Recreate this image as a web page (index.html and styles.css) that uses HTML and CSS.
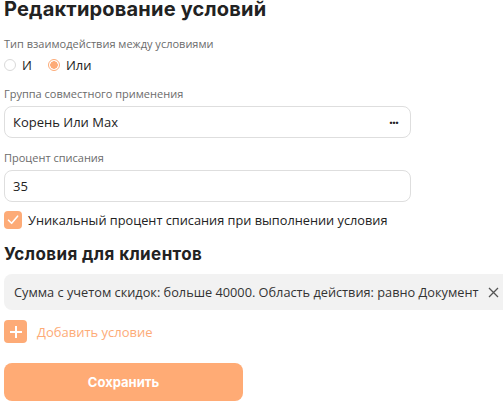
FILE: index.html
```html
<!DOCTYPE html>
<html lang="ru">
<head>
<meta charset="utf-8">
<link rel="stylesheet" href="styles.css">
</head>
<body>
<div class="page">
  <h1 class="title">Редактирование условий</h1>
  <div class="label label-first">Тип взаимодействия между условиями</div>
  <div class="radios">
    <label class="radio"><span class="radio-dot"></span><span>И</span></label>
    <label class="radio"><span class="radio-dot radio-on"></span><span>Или</span></label>
  </div>
  <div class="label">Группа совместного применения</div>
  <div class="field">
    <span>Корень Или Max</span>
    <span class="dots">···</span>
  </div>
  <div class="label">Процент списания</div>
  <div class="field"><span>35</span></div>
  <div class="check-row">
    <span class="checkbox">
      <svg width="14" height="14" viewBox="0 0 14 14"><path d="M2.5 7.2 L5.6 10.3 L11.6 3.2" fill="none" stroke="#fff" stroke-width="1.6" stroke-linecap="round" stroke-linejoin="round"/></svg>
    </span>
    <span>Уникальный процент списания при выполнении условия</span>
  </div>
  <h2 class="subtitle">Условия для клиентов</h2>
  <div class="chip">
    <span>Сумма с учетом скидок: больше 40000. Область действия: равно Документ</span>
    <svg class="chip-x" width="11" height="11" viewBox="0 0 11 11"><path d="M1 1 L10 10 M10 1 L1 10" stroke="#555" stroke-width="1.3" fill="none"/></svg>
  </div>
  <div class="add-row">
    <span class="add-btn">
      <svg width="14" height="14" viewBox="0 0 14 14"><path d="M7 1 V13 M1 7 H13" stroke="#fff" stroke-width="2" fill="none"/></svg>
    </span>
    <span class="add-text">Добавить условие</span>
  </div>
  <button class="save">Сохранить</button>
</div>
</body>
</html>
```

FILE: styles.css
```css
html, body {
  margin: 0;
  padding: 0;
  background: #fff;
  overflow: hidden;
}
body {
  font-family: "Open Sans", "Liberation Sans", sans-serif;
  color: #222;
  width: 503px;
  height: 409px;
}
.page {
  padding-left: 4px;
  width: 407px;
}
.title {
  margin: -4px 0 0 0;
  font-family: "Inter", "Open Sans", sans-serif;
  font-weight: 700;
  font-size: 20px;
  line-height: 26px;
  color: #222;
  letter-spacing: 0.2px;
  white-space: nowrap;
}
.label {
  font-size: 11px;
  line-height: 15px;
  color: #6b6b6b;
  margin-top: 12px;
  margin-bottom: 5px;
}
.label-first {
  margin-top: 14px;
}
.radios {
  display: flex;
  gap: 16px;
  height: 18px;
  align-items: center;
  font-size: 13px;
  color: #222;
}
.radio {
  display: flex;
  align-items: center;
  gap: 6px;
}
.radio-dot {
  width: 10px;
  height: 10px;
  border: 1px solid #d9d9d9;
  border-radius: 50%;
  box-sizing: content-box;
}
.radio-on {
  border-color: #fdab77;
  background: radial-gradient(circle, #fdab77 0 3.5px, #fff 4px);
}
.field {
  height: 30px;
  border: 1px solid #dedede;
  border-radius: 8px;
  display: flex;
  align-items: center;
  justify-content: space-between;
  padding: 0 12px 0 8px;
  font-size: 13px;
  color: #222;
}
.dots {
  font-weight: 700;
  font-size: 14px;
  letter-spacing: -1px;
}
.check-row {
  display: flex;
  align-items: center;
  gap: 6px;
  margin-top: 9px;
  font-size: 12.75px;
  color: #222;
}
.checkbox {
  width: 18px;
  height: 18px;
  background: #fdab77;
  border-radius: 4px;
  display: flex;
  align-items: center;
  justify-content: center;
}
.subtitle {
  margin: 14px 0 0 0;
  font-family: "Inter", "Open Sans", sans-serif;
  font-weight: 700;
  font-size: 17px;
  line-height: 22px;
  letter-spacing: 0.4px;
  color: #222;
}
.chip {
  margin-top: 9px;
  width: 510px;
  height: 36px;
  background: #f2f2f2;
  border-radius: 8px;
  display: flex;
  align-items: center;
  padding-left: 10px;
  gap: 10px;
  font-size: 12.75px;
  color: #333;
  box-sizing: border-box;
  white-space: nowrap;
}
.add-row {
  display: flex;
  align-items: center;
  gap: 10px;
  margin-top: 10px;
}
.add-btn {
  width: 23px;
  height: 23px;
  background: #fdab77;
  border-radius: 4px;
  display: flex;
  align-items: center;
  justify-content: center;
}
.add-text {
  font-size: 13px;
  color: #fdab77;
}
.save {
  display: block;
  margin-top: 20px;
  width: 239px;
  height: 38px;
  border: 0;
  border-radius: 8px;
  background: #ffab75;
  color: #fff;
  font-family: "Inter", "Open Sans", sans-serif;
  font-weight: 700;
  font-size: 13px;
}
```
